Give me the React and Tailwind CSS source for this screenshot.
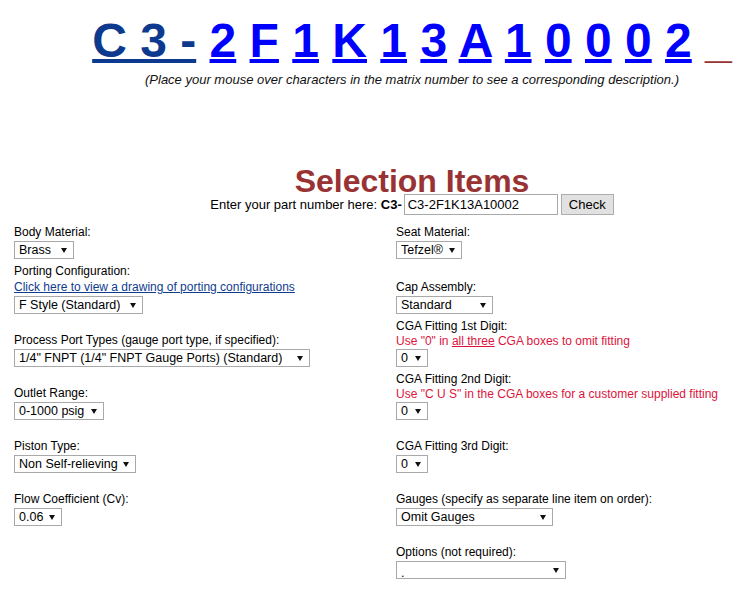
import React from "react";

const matrix = ["2", "F", "1", "K", "1", "3", "A", "1", "0", "0", "0", "2"];

function Arrow() {
  return (
    <svg width="6" height="5" viewBox="0 0 6 5" className="shrink-0">
      <polygon points="0,0 6,0 3,5" fill="#111" />
    </svg>
  );
}

// fake native select, fixed width like the widest option
function Select({ w, children }) {
  return (
    <div className="mt-[1px] mb-[4px] flex h-[18px]">
      <div
        className={`${w} flex h-[18px] items-center justify-between border border-[#a9a9a9] bg-white pl-[4px] pr-[6px] text-[12.5px] leading-none text-black`}
      >
        <span className="whitespace-nowrap">{children}</span>
        <Arrow />
      </div>
    </div>
  );
}

function Label({ children }) {
  return <div className="h-4 whitespace-nowrap leading-4">{children}</div>;
}

function Note({ children }) {
  return <div className="h-[14px] whitespace-nowrap leading-[14px] text-[#dc143c]">{children}</div>;
}

function Gap({ h = "h-[14px]" }) {
  return <div className={h} />;
}

export default function App() {
  return (
    <div className="min-h-[597px] w-[750px] bg-white font-['Liberation_Sans',Arial,sans-serif] text-black">
      {/* header + part number */}
      <div className="pl-[74px] pt-[13px] text-center">
        <div className="whitespace-pre text-[48px] font-bold leading-[55px]">
          <a href="#" className="text-[#0d3a8e] underline decoration-4 underline-offset-[2px]">
            C 3 -
          </a>
          {" "}
          {matrix.map((c, i) => (
            <React.Fragment key={i}>
              <a href="#" className="text-[#0000ff] underline decoration-4 underline-offset-[2px]">
                {c}
              </a>
              {" "}
            </React.Fragment>
          ))}
          <span className="text-[#993333]">_</span>
        </div>
        <div className="mt-[4px] text-[13px] italic leading-4 text-[#111]">
          (Place your mouse over characters in the matrix number to see a corresponding description.)
        </div>

        <h1 className="mt-[80px] text-[32px] font-bold leading-[26px] text-[#993333]">Selection Items</h1>

        <div className="flex h-[21px] items-center justify-center text-[13px]">
          <span className="whitespace-pre">
            Enter your part number here: <b>C3-</b>
          </span>
          <input
            defaultValue="C3-2F1K13A10002"
            className="ml-[2px] h-[21px] w-[154px] border border-[#a9a9a9] bg-white px-[3px] text-[13px] outline-none"
          />
          <button className="ml-[3px] h-[21px] w-[53px] border border-[#adadad] bg-[#e1e1e1] text-[13px]">
            Check
          </button>
        </div>
      </div>

      {/* two columns of options */}
      <div className="mt-[9px] flex pl-[14px] text-[12px]">
        <div className="w-[382px]">
          <Label>Body Material:</Label>
          <Select w="w-[60px]">Brass</Select>
          <Label>Porting Configuration:</Label>
          <div className="h-4 leading-4">
            <a href="#" className="text-[#0f3b8f] underline">
              Click here to view a drawing of porting configurations
            </a>
          </div>
          <Select w="w-[129px]">F Style (Standard)</Select>
          <Gap />
          <Label>Process Port Types (gauge port type, if specified):</Label>
          <Select w="w-[296px]">1/4" FNPT (1/4" FNPT Gauge Ports) (Standard)</Select>
          <Gap />
          <Label>Outlet Range:</Label>
          <Select w="w-[90px]">0-1000 psig</Select>
          <Gap />
          <Label>Piston Type:</Label>
          <Select w="w-[122px]">Non Self-relieving</Select>
          <Gap />
          <Label>Flow Coefficient (Cv):</Label>
          <Select w="w-[48px]">0.06</Select>
        </div>

        <div className="flex-1">
          <Label>Seat Material:</Label>
          <Select w="w-[66px]">Tefzel®</Select>
          <Gap h="h-4" />
          <Label>Cap Assembly:</Label>
          <Select w="w-[97px]">Standard</Select>
          <Label>CGA Fitting 1st Digit:</Label>
          <Note>
            Use "0" in <span className="underline">all three</span> CGA boxes to omit fitting
          </Note>
          <Select w="w-[32px]">0</Select>
          <Label>CGA Fitting 2nd Digit:</Label>
          <Note>Use "C U S" in the CGA boxes for a customer supplied fitting</Note>
          <Select w="w-[32px]">0</Select>
          <Gap />
          <Label>CGA Fitting 3rd Digit:</Label>
          <Select w="w-[32px]">0</Select>
          <Gap />
          <Label>Gauges (specify as separate line item on order):</Label>
          <Select w="w-[157px]">Omit Gauges</Select>
          <Gap />
          <Label>Options (not required):</Label>
          <Select w="w-[170px]">
            <span className="relative top-[3px]">.</span>
          </Select>
        </div>
      </div>
    </div>
  );
}
